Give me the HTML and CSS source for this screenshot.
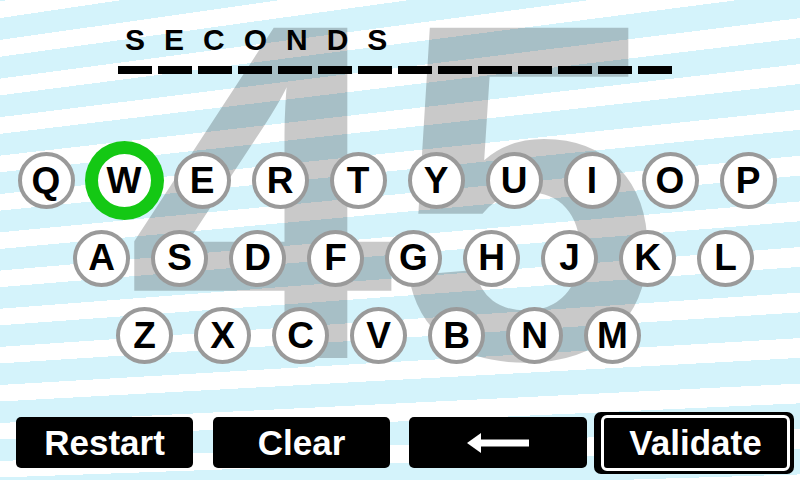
FILE: index.html
```html
<!DOCTYPE html>
<html lang="en">
<head>
<meta charset="utf-8">
<title>Seconds</title>
<link rel="stylesheet" href="styles.css">
</head>
<body>
<div class="screen">
  <div class="big-count">45</div>
  <div class="title">
    <div class="label">SECONDS</div>
    <div class="dashes">
      <span></span><span></span><span></span><span></span><span></span><span></span><span></span>
      <span></span><span></span><span></span><span></span><span></span><span></span><span></span>
    </div>
  </div>
  <div class="keyboard">
    <div class="row row-1">
      <div class="key">Q</div><div class="key selected">W</div><div class="key">E</div><div class="key">R</div><div class="key">T</div><div class="key">Y</div><div class="key">U</div><div class="key">I</div><div class="key">O</div><div class="key">P</div>
    </div>
    <div class="row row-2">
      <div class="key">A</div><div class="key">S</div><div class="key">D</div><div class="key">F</div><div class="key">G</div><div class="key">H</div><div class="key">J</div><div class="key">K</div><div class="key">L</div>
    </div>
    <div class="row row-3">
      <div class="key">Z</div><div class="key">X</div><div class="key">C</div><div class="key">V</div><div class="key">B</div><div class="key">N</div><div class="key">M</div>
    </div>
  </div>
  <div class="actions">
    <div class="btn btn-restart">Restart</div>
    <div class="btn btn-clear">Clear</div>
    <div class="btn btn-back">
      <svg width="62" height="20" viewBox="0 0 62 20" aria-hidden="true">
        <polygon points="0,10 14,0 14,20" fill="#fff"/>
        <rect x="13" y="6.5" width="49" height="7" fill="#fff"/>
      </svg>
    </div>
    <div class="btn-validate">
      <div class="validate-inner">Validate</div>
    </div>
  </div>
</div>
</body>
</html>
```
FILE: styles.css
```css
html, body {
  margin: 0;
  padding: 0;
}
body {
  width: 800px;
  height: 480px;
  overflow: hidden;
  font-family: "Liberation Sans", Arial, sans-serif;
}
.screen {
  position: relative;
  width: 800px;
  height: 480px;
  overflow: hidden;
  display: flex;
  flex-direction: column;
  background: repeating-conic-gradient(from 0.49deg at -4100px 625px,
      #d4f3fb 0deg 0.3deg, #ffffff 0.3deg 0.53deg);
}
.big-count {
  position: absolute;
  left: 127px;
  top: -48px;
  font-size: 480px;
  line-height: 480px;
  font-weight: 700;
  color: rgba(0, 0, 0, 0.21);
  z-index: 0;
  pointer-events: none;
}
.title, .keyboard, .actions {
  position: relative;
  z-index: 1;
}
.title {
  padding-top: 25px;
}
.label {
  padding-left: 125px;
  font-size: 30px;
  line-height: 30px;
  font-weight: 700;
  letter-spacing: 19px;
  color: #000;
}
.dashes {
  margin-top: 11px;
  padding-left: 118px;
  display: flex;
  gap: 6px;
}
.dashes span {
  width: 34px;
  height: 8px;
  background: #000;
}
.keyboard {
  margin-top: 78px;
  display: flex;
  flex-direction: column;
  gap: 20.5px;
}
.row {
  display: flex;
  gap: 21px;
}
.row-1 { padding-left: 17.5px; }
.row-2 { padding-left: 73px; }
.row-3 { padding-left: 116px; }
.key {
  box-sizing: border-box;
  width: 57px;
  height: 57px;
  border: 4px solid #9a9a9a;
  border-radius: 50%;
  background: #fff;
  display: flex;
  align-items: center;
  justify-content: center;
  font-size: 37px;
  font-weight: 700;
  color: #000;
}
.key.selected {
  border: 2px solid #14c814;
  box-shadow: 0 0 0 11px #14c814;
}
.actions {
  margin-top: 47.5px;
  padding-left: 16px;
  display: flex;
  align-items: center;
}
.btn {
  box-sizing: border-box;
  width: 177px;
  height: 51px;
  border-radius: 5px;
  background: #000;
  color: #fff;
  font-size: 35px;
  font-weight: 700;
  display: flex;
  align-items: center;
  justify-content: center;
}
.btn-clear { margin-left: 20px; }
.btn-back { margin-left: 19px; width: 178px; }
.btn-back svg { display: block; }
.btn-validate {
  box-sizing: border-box;
  margin-left: 7px;
  width: 200px;
  height: 62px;
  padding: 3px 4px 3px 7px;
  border-radius: 7px;
  background: #000;
  display: flex;
}
.validate-inner {
  flex: 1;
  border: 3px solid #fff;
  border-radius: 6px;
  display: flex;
  align-items: center;
  justify-content: center;
  color: #fff;
  font-size: 35px;
  font-weight: 700;
}
```
